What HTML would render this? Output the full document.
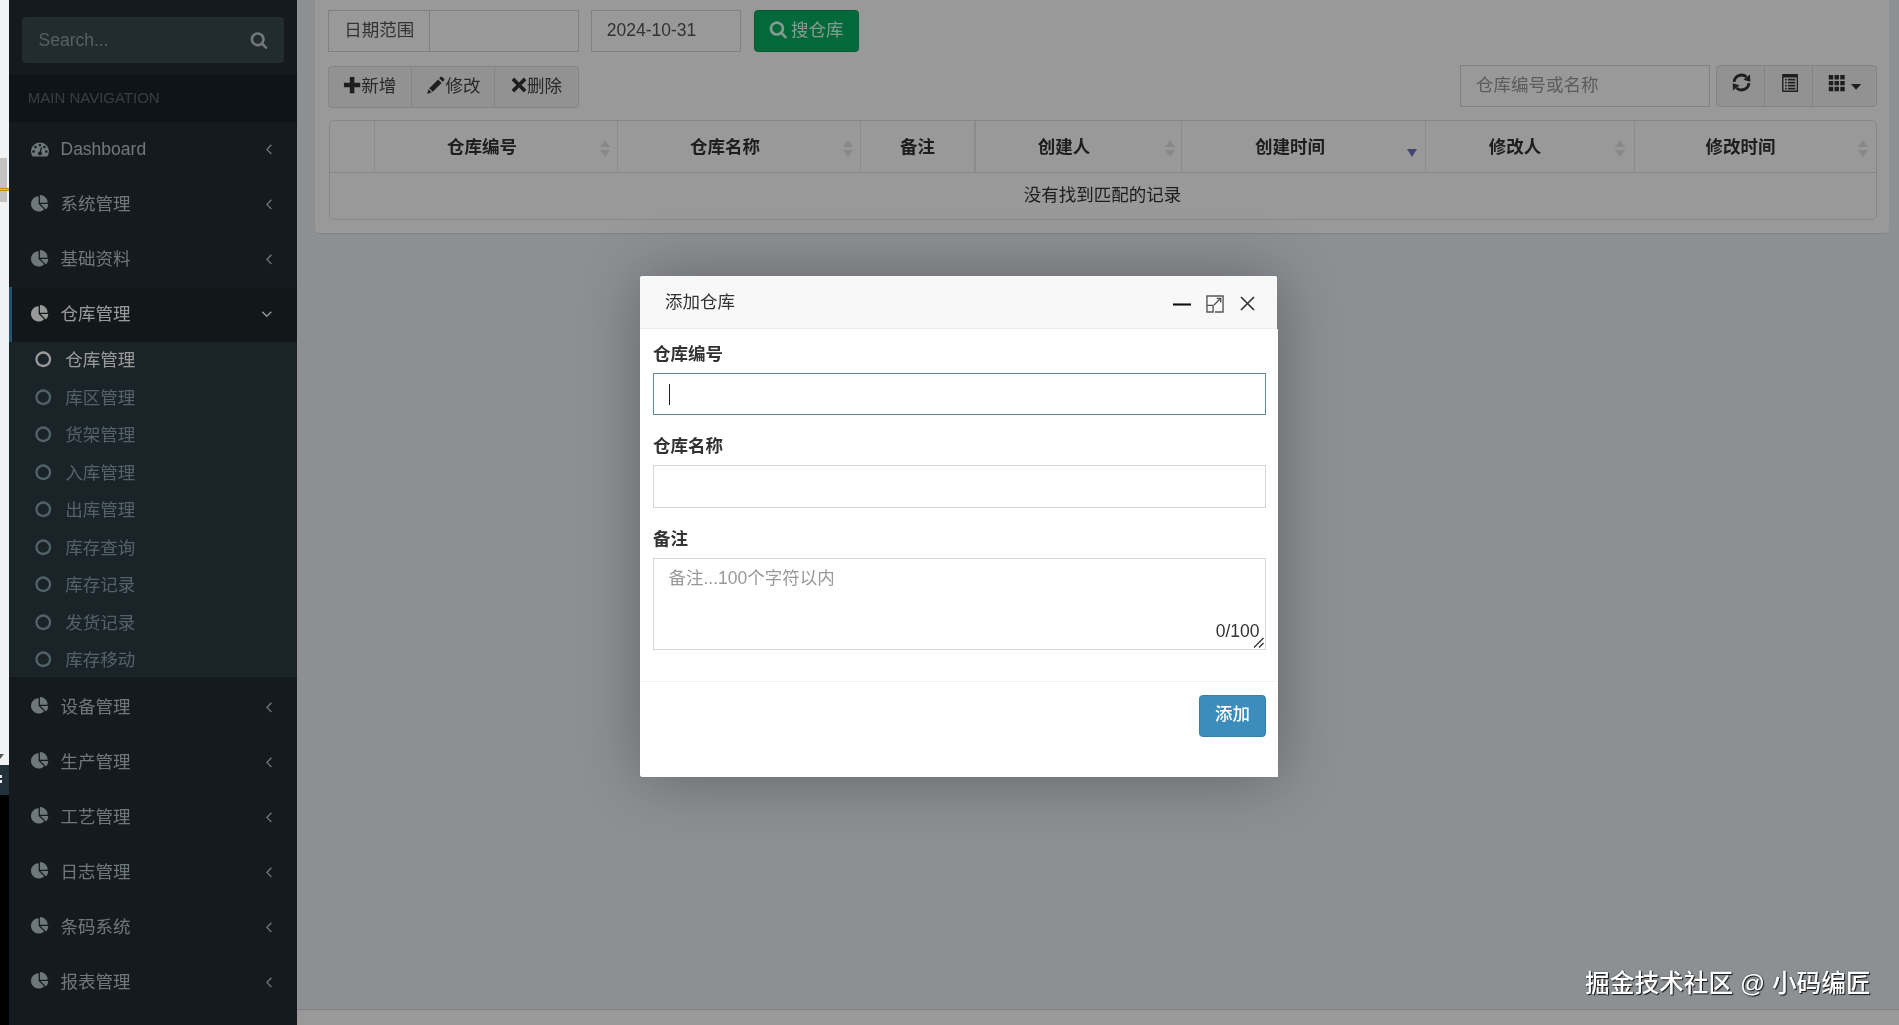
<!DOCTYPE html>
<html lang="zh-CN">
<head>
<meta charset="utf-8">
<title>仓库管理</title>
<style>
*{box-sizing:border-box;margin:0;padding:0}
html,body{width:1899px;height:1025px;overflow:hidden;background:#ecf0f5}
body{position:relative;font-family:"Liberation Sans","Noto Sans CJK SC",sans-serif;font-size:17.5px;line-height:25px;color:#333}
svg{display:block}
.abs{position:absolute}
#side,#content,#modal,#wm{will-change:transform}
/* ---------- left strip (outside page) ---------- */
#strip{position:absolute;left:0;top:0;width:9px;height:1025px;background:#f1f2f3;z-index:50;overflow:hidden}
#strip .g{position:absolute;left:0;top:158px;width:7px;height:44px;background:#c2c2c2}
#strip .o{position:absolute;left:0;top:188px;width:9px;height:3px;background:#b98a12}
#strip .o i{position:absolute;left:0;top:1px;width:9px;height:1px;background:#e6c04a}
#strip .t{position:absolute;left:0;top:765px;width:9px;height:30px;background:#22303a}
#strip .b{position:absolute;left:0;top:795px;width:9px;height:230px;background:#000}
#strip .tri{position:absolute;left:-4px;top:753.5px;width:0;height:0;border-left:4px solid transparent;border-right:4px solid transparent;border-top:5px solid #555}
#strip .w{position:absolute;left:0;top:775px;width:2px;height:3px;background:#e8eef2;box-shadow:0 5px 0 #e8eef2}
/* ---------- sidebar ---------- */
#side{position:absolute;left:9px;top:0;width:288px;height:1025px;background:#242c33;color:#b8c7ce}
#sform{position:absolute;left:13px;top:17px;width:262px;height:46px;background:#374850;border-radius:4px}
#sform span{position:absolute;left:16.5px;top:11px;color:#c9d0d4;opacity:.62}
#sform svg{position:absolute;left:228px;top:14px;width:18px;height:18px;fill:#dfe6ea;opacity:.8}
#mhead{position:absolute;left:0;top:75px;width:288px;height:47px;background:#1a222b;color:#5c6870;font-size:15px;line-height:46.5px;padding-left:18.75px}
ul{list-style:none}
#menu{position:absolute;left:0;top:122px;width:288px}
#menu>li>a{display:block;position:relative;height:55px;line-height:25px;padding:15px 6px 15px 18.75px;border-left:3.75px solid transparent;color:#b8c7ce;white-space:nowrap}
#menu>li>a .ic{position:absolute;left:18.65px;top:17.8px;width:17.9px;height:17.9px;fill:#b8c7ce}
#menu>li>a .tx{position:absolute;left:48.5px;top:15px}
#menu>li>a .ch{position:absolute;right:20px;top:18px;width:17.5px;height:17.5px;fill:#b8c7ce}
#menu>li.act>a{background:#1e282c;border-left-color:#3c8dbc;color:#fff}
#menu>li.act>a .ic,#menu>li.act>a .ch{fill:#fff}
#menu>li.act>a .ch{right:21.5px}
#sub{background:linear-gradient(#2c3b41 0,#2c3b41 335.25px,rgba(44,59,65,0) 335.25px);padding-left:6.25px}
#sub li a{display:block;position:relative;height:37.5px;color:#8aa4af}
#sub li a svg{position:absolute;left:18.25px;top:8.25px;width:18.5px;height:18.5px;fill:#8aa4af}
#sub li a span{position:absolute;left:50px;top:6.25px}
#sub li.on a{color:#fff}
#sub li.on a svg{fill:#fff}
/* ---------- content ---------- */
#box{position:absolute;left:315px;top:-10px;width:1574px;height:242.5px;background:#fff;border-radius:4px;box-shadow:0 1px 1px rgba(0,0,0,.1)}
#foot{position:absolute;left:297px;top:1009px;width:1602px;height:16px;background:#fff;border-top:1px solid #d2d6de}

/* ---------- content widgets ---------- */
.fc{position:absolute;height:41.5px;background:#fff;border:1.25px solid #d6d8dc;color:#555;line-height:25px;padding:7px 15px;white-space:nowrap}
.bt{position:absolute;height:41.5px;background:#f4f4f4;border:1.25px solid #ddd;color:#444;white-space:nowrap}
.bt svg{position:absolute;fill:#333}
.bt span{position:absolute;top:6.5px}
#gbtn{position:absolute;left:754px;top:10px;width:105px;height:41.5px;background:#08b062;border:1.25px solid #009a54;border-radius:3.75px;color:#e0fff0}
#gbtn svg{position:absolute;left:13.700px;top:9.200px;width:18.500px;height:18.500px;fill:#e0fff0}
#gbtn span{position:absolute;left:36px;top:6.5px}
#tbl{position:absolute;left:328.6px;top:120px;width:1548px;height:99.5px;border:1.25px solid #e2e2e2;border-radius:5px}
#tbl .hb{position:absolute;left:0;top:51px;width:100%;height:1.25px;background:#e0e0e0}
#tbl .v{position:absolute;top:0;width:1.25px;height:51px;background:#eaeaea}
#tbl .th{position:absolute;top:14.25px;font-weight:700;color:#333;text-align:center;width:120px;margin-left:-60px;white-space:nowrap}
#tbl .so{position:absolute;top:19px;width:10px;height:18px}
#tbl .so i{position:absolute;left:0;width:0;height:0;border-left:5px solid transparent;border-right:5px solid transparent}
#tbl .so i.u{top:0;border-bottom:7.5px solid #e3e3e3}
#tbl .so i.d{top:10px;border-top:7.5px solid #e3e3e3}
#tbl .sd{position:absolute;top:27.5px;width:0;height:0;border-left:5.5px solid transparent;border-right:5.5px solid transparent;border-top:8.5px solid #6e74c4}
#tbl .nr{position:absolute;left:0;top:61.5px;width:100%;text-align:center;color:#333}
/* overlay */
#shade{position:absolute;left:9px;top:0;width:1890px;height:1025px;background:rgba(0,0,0,.4);z-index:20}
/* ---------- modal ---------- */
#modal{position:absolute;left:640px;top:276px;width:637.4px;height:501px;background:#fff;z-index:30;box-shadow:1.25px 1.25px 62.5px rgba(0,0,0,.3);border-radius:2.5px}
#mtitle{position:absolute;left:0;top:0;width:100%;height:52.5px;background:#f8f8f8;border-bottom:1.25px solid #eee;border-radius:2.5px 2.5px 0 0;color:#333;padding-left:24.9px;line-height:53px}

#mtitle svg{position:absolute;stroke:#2e2d3c;fill:none}
#mbody label{position:absolute;left:13px;font-weight:700;color:#333;white-space:nowrap}
#mbody .in{position:absolute;left:13px;width:613px;background:#fff;border:1.25px solid #d4d6da}
#mbody .in.f{border-color:#5b8b8e}
#mfoot{position:absolute;left:0;top:405px;width:100%;height:1.25px;background:#f4f4f4}
#abtn{position:absolute;left:559px;top:419px;width:67px;height:41.5px;background:#3c8dbc;border:1.25px solid #367fa9;border-radius:3.75px;color:#fff;text-align:center;line-height:25px;padding-top:6.25px;font-weight:500}
/* watermark */
#wm{position:absolute;left:1585px;top:967px;z-index:60;color:#fff;font-weight:500;font-size:24.7px;line-height:34px;white-space:nowrap;text-shadow:1px 1px 1px rgba(0,0,0,.85),0 0 2px rgba(0,0,0,.35)}
</style>
</head>
<body>
<div id="strip"><div class="g"></div><div class="o"><i></i></div><div class="tri"></div><div class="t"></div><div class="w"></div><div class="b"></div></div>

<div id="side">
  <div id="sform"><span>Search...</span>
    <svg viewBox="0 0 1792 1792"><path d="M1216 832q0-185-131.500-316.500t-316.500-131.500-316.500 131.500-131.500 316.500 131.500 316.500 316.500 131.500 316.500-131.500 131.500-316.500zm512 832q0 52-38 90t-90 38q-54 0-90-38l-343-342q-179 124-399 124-143 0-273.500-55.500t-225-150-150-225-55.500-273.500 55.500-273.500 150-225 225-150 273.500-55.500 273.500 55.500 225 150 150 225 55.500 273.500q0 220-124 399l343 343q37 37 37 90z"/></svg>
  </div>
  <div id="mhead">MAIN NAVIGATION</div>
  <ul id="menu">
    <li><a><svg class="ic" viewBox="0 0 1792 1792"><path d="M384 1152q0-53-37.500-90.500t-90.500-37.500-90.500 37.500-37.500 90.500 37.500 90.500 90.500 37.500 90.500-37.500 37.500-90.500zm192-448q0-53-37.500-90.500t-90.500-37.500-90.500 37.500-37.500 90.500 37.500 90.500 90.500 37.500 90.500-37.500 37.500-90.500zm428 481l101-382q6-26-7.500-48.500t-38.500-29.500-48 6.500-30 39.500l-101 382q-60 5-107 43.500t-63 98.500q-20 77 20 146t117 89 146-20 89-117q16-60-6-117t-72-91zm660-33q0-53-37.500-90.500t-90.500-37.500-90.500 37.500-37.500 90.500 37.500 90.500 90.500 37.500 90.500-37.500 37.500-90.500zm-640-640q0-53-37.500-90.500t-90.500-37.500-90.500 37.500-37.500 90.500 37.500 90.500 90.500 37.500 90.500-37.500 37.500-90.500zm448 192q0-53-37.500-90.500t-90.500-37.500-90.500 37.500-37.500 90.500 37.500 90.500 90.500 37.500 90.500-37.500 37.500-90.500zm320 448q0 261-141 483-19 29-54 29h-1402q-35 0-54-29-141-221-141-483 0-182 71-348t191-286 286-191 348-71 348 71 286 191 191 286 71 348z"/></svg><span class="tx">Dashboard</span><svg class="ch" viewBox="0 0 1792 1792"><path d="M1203 544q0 13-10 23l-393 393 393 393q10 10 10 23t-10 23l-50 50q-10 10-23 10t-23-10l-466-466q-10-10-10-23t10-23l466-466q10-10 23-10t23 10l50 50q10 10 10 23z"/></svg></a></li>
    <li><a><svg class="ic" viewBox="0 0 1792 1792"><path d="M768 890l546 546q-106 108-247.500 168t-298.500 60q-209 0-385.500-103t-279.500-279.500-103-385.500 103-385.500 279.500-279.500 385.500-103v762zm187 6h773q0 157-60 298.500t-168 247.500zm709-128h-768v-768q209 0 385.500 103t279.500 279.500 103 385.500z"/></svg><span class="tx">系统管理</span><svg class="ch" viewBox="0 0 1792 1792"><path d="M1203 544q0 13-10 23l-393 393 393 393q10 10 10 23t-10 23l-50 50q-10 10-23 10t-23-10l-466-466q-10-10-10-23t10-23l466-466q10-10 23-10t23 10l50 50q10 10 10 23z"/></svg></a></li>
    <li><a><svg class="ic" viewBox="0 0 1792 1792"><path d="M768 890l546 546q-106 108-247.500 168t-298.500 60q-209 0-385.500-103t-279.500-279.500-103-385.500 103-385.500 279.500-279.500 385.500-103v762zm187 6h773q0 157-60 298.500t-168 247.500zm709-128h-768v-768q209 0 385.500 103t279.500 279.500 103 385.500z"/></svg><span class="tx">基础资料</span><svg class="ch" viewBox="0 0 1792 1792"><path d="M1203 544q0 13-10 23l-393 393 393 393q10 10 10 23t-10 23l-50 50q-10 10-23 10t-23-10l-466-466q-10-10-10-23t10-23l466-466q10-10 23-10t23 10l50 50q10 10 10 23z"/></svg></a></li>
    <li class="act"><a><svg class="ic" viewBox="0 0 1792 1792"><path d="M768 890l546 546q-106 108-247.500 168t-298.500 60q-209 0-385.500-103t-279.500-279.500-103-385.500 103-385.500 279.500-279.500 385.500-103v762zm187 6h773q0 157-60 298.500t-168 247.500zm709-128h-768v-768q209 0 385.500 103t279.500 279.500 103 385.500z"/></svg><span class="tx">仓库管理</span><svg class="ch" viewBox="0 0 1792 1792"><path d="M1395 736q0 13-10 23l-466 466q-10 10-23 10t-23-10l-466-466q-10-10-10-23t10-23l50-50q10-10 23-10t23 10l393 393 393-393q10-10 23-10t23 10l50 50q10 10 10 23z"/></svg></a>
      <ul id="sub">
        <li class="on"><a><svg viewBox="0 0 1792 1792"><path d="M896 352q-148 0-273 73t-198 198-73 273 73 273 198 198 273 73 273-73 198-198 73-273-73-273-198-198-273-73zm768 544q0 209-103 385.500t-279.500 279.500-385.500 103-385.500-103-279.500-279.500-103-385.500 103-385.500 279.500-279.500 385.500-103 385.500 103 279.500 279.500 103 385.500z"/></svg><span>仓库管理</span></a></li>
        <li><a><svg viewBox="0 0 1792 1792"><path d="M896 352q-148 0-273 73t-198 198-73 273 73 273 198 198 273 73 273-73 198-198 73-273-73-273-198-198-273-73zm768 544q0 209-103 385.500t-279.500 279.500-385.500 103-385.500-103-279.500-279.500-103-385.500 103-385.500 279.500-279.500 385.500-103 385.500 103 279.500 279.500 103 385.500z"/></svg><span>库区管理</span></a></li>
        <li><a><svg viewBox="0 0 1792 1792"><path d="M896 352q-148 0-273 73t-198 198-73 273 73 273 198 198 273 73 273-73 198-198 73-273-73-273-198-198-273-73zm768 544q0 209-103 385.500t-279.500 279.500-385.500 103-385.500-103-279.500-279.500-103-385.500 103-385.500 279.500-279.500 385.500-103 385.500 103 279.500 279.500 103 385.500z"/></svg><span>货架管理</span></a></li>
        <li><a><svg viewBox="0 0 1792 1792"><path d="M896 352q-148 0-273 73t-198 198-73 273 73 273 198 198 273 73 273-73 198-198 73-273-73-273-198-198-273-73zm768 544q0 209-103 385.500t-279.500 279.500-385.500 103-385.500-103-279.500-279.500-103-385.500 103-385.500 279.500-279.500 385.500-103 385.500 103 279.500 279.500 103 385.500z"/></svg><span>入库管理</span></a></li>
        <li><a><svg viewBox="0 0 1792 1792"><path d="M896 352q-148 0-273 73t-198 198-73 273 73 273 198 198 273 73 273-73 198-198 73-273-73-273-198-198-273-73zm768 544q0 209-103 385.500t-279.500 279.500-385.500 103-385.500-103-279.500-279.500-103-385.500 103-385.500 279.500-279.500 385.500-103 385.500 103 279.500 279.500 103 385.500z"/></svg><span>出库管理</span></a></li>
        <li><a><svg viewBox="0 0 1792 1792"><path d="M896 352q-148 0-273 73t-198 198-73 273 73 273 198 198 273 73 273-73 198-198 73-273-73-273-198-198-273-73zm768 544q0 209-103 385.500t-279.500 279.500-385.500 103-385.500-103-279.500-279.500-103-385.500 103-385.500 279.500-279.500 385.500-103 385.500 103 279.500 279.500 103 385.500z"/></svg><span>库存查询</span></a></li>
        <li><a><svg viewBox="0 0 1792 1792"><path d="M896 352q-148 0-273 73t-198 198-73 273 73 273 198 198 273 73 273-73 198-198 73-273-73-273-198-198-273-73zm768 544q0 209-103 385.500t-279.500 279.500-385.500 103-385.500-103-279.500-279.500-103-385.500 103-385.500 279.500-279.500 385.500-103 385.500 103 279.500 279.500 103 385.500z"/></svg><span>库存记录</span></a></li>
        <li><a><svg viewBox="0 0 1792 1792"><path d="M896 352q-148 0-273 73t-198 198-73 273 73 273 198 198 273 73 273-73 198-198 73-273-73-273-198-198-273-73zm768 544q0 209-103 385.500t-279.500 279.500-385.500 103-385.500-103-279.500-279.500-103-385.500 103-385.500 279.500-279.500 385.500-103 385.500 103 279.500 279.500 103 385.500z"/></svg><span>发货记录</span></a></li>
        <li><a><svg viewBox="0 0 1792 1792"><path d="M896 352q-148 0-273 73t-198 198-73 273 73 273 198 198 273 73 273-73 198-198 73-273-73-273-198-198-273-73zm768 544q0 209-103 385.500t-279.500 279.500-385.500 103-385.500-103-279.500-279.500-103-385.500 103-385.500 279.500-279.500 385.500-103 385.500 103 279.500 279.500 103 385.500z"/></svg><span>库存移动</span></a></li>
      </ul>
    </li>
    <li><a><svg class="ic" viewBox="0 0 1792 1792"><path d="M768 890l546 546q-106 108-247.500 168t-298.500 60q-209 0-385.500-103t-279.500-279.500-103-385.500 103-385.500 279.500-279.500 385.500-103v762zm187 6h773q0 157-60 298.500t-168 247.500zm709-128h-768v-768q209 0 385.500 103t279.500 279.500 103 385.500z"/></svg><span class="tx">设备管理</span><svg class="ch" viewBox="0 0 1792 1792"><path d="M1203 544q0 13-10 23l-393 393 393 393q10 10 10 23t-10 23l-50 50q-10 10-23 10t-23-10l-466-466q-10-10-10-23t10-23l466-466q10-10 23-10t23 10l50 50q10 10 10 23z"/></svg></a></li>
    <li><a><svg class="ic" viewBox="0 0 1792 1792"><path d="M768 890l546 546q-106 108-247.500 168t-298.500 60q-209 0-385.500-103t-279.500-279.500-103-385.500 103-385.500 279.500-279.500 385.500-103v762zm187 6h773q0 157-60 298.500t-168 247.500zm709-128h-768v-768q209 0 385.500 103t279.500 279.500 103 385.500z"/></svg><span class="tx">生产管理</span><svg class="ch" viewBox="0 0 1792 1792"><path d="M1203 544q0 13-10 23l-393 393 393 393q10 10 10 23t-10 23l-50 50q-10 10-23 10t-23-10l-466-466q-10-10-10-23t10-23l466-466q10-10 23-10t23 10l50 50q10 10 10 23z"/></svg></a></li>
    <li><a><svg class="ic" viewBox="0 0 1792 1792"><path d="M768 890l546 546q-106 108-247.500 168t-298.500 60q-209 0-385.500-103t-279.500-279.500-103-385.500 103-385.500 279.500-279.500 385.500-103v762zm187 6h773q0 157-60 298.500t-168 247.500zm709-128h-768v-768q209 0 385.500 103t279.500 279.500 103 385.500z"/></svg><span class="tx">工艺管理</span><svg class="ch" viewBox="0 0 1792 1792"><path d="M1203 544q0 13-10 23l-393 393 393 393q10 10 10 23t-10 23l-50 50q-10 10-23 10t-23-10l-466-466q-10-10-10-23t10-23l466-466q10-10 23-10t23 10l50 50q10 10 10 23z"/></svg></a></li>
    <li><a><svg class="ic" viewBox="0 0 1792 1792"><path d="M768 890l546 546q-106 108-247.500 168t-298.500 60q-209 0-385.500-103t-279.500-279.500-103-385.500 103-385.500 279.500-279.500 385.500-103v762zm187 6h773q0 157-60 298.500t-168 247.500zm709-128h-768v-768q209 0 385.500 103t279.500 279.500 103 385.500z"/></svg><span class="tx">日志管理</span><svg class="ch" viewBox="0 0 1792 1792"><path d="M1203 544q0 13-10 23l-393 393 393 393q10 10 10 23t-10 23l-50 50q-10 10-23 10t-23-10l-466-466q-10-10-10-23t10-23l466-466q10-10 23-10t23 10l50 50q10 10 10 23z"/></svg></a></li>
    <li><a><svg class="ic" viewBox="0 0 1792 1792"><path d="M768 890l546 546q-106 108-247.500 168t-298.500 60q-209 0-385.500-103t-279.500-279.500-103-385.500 103-385.500 279.500-279.500 385.500-103v762zm187 6h773q0 157-60 298.500t-168 247.500zm709-128h-768v-768q209 0 385.500 103t279.500 279.500 103 385.500z"/></svg><span class="tx">条码系统</span><svg class="ch" viewBox="0 0 1792 1792"><path d="M1203 544q0 13-10 23l-393 393 393 393q10 10 10 23t-10 23l-50 50q-10 10-23 10t-23-10l-466-466q-10-10-10-23t10-23l466-466q10-10 23-10t23 10l50 50q10 10 10 23z"/></svg></a></li>
    <li><a><svg class="ic" viewBox="0 0 1792 1792"><path d="M768 890l546 546q-106 108-247.500 168t-298.500 60q-209 0-385.500-103t-279.500-279.500-103-385.500 103-385.500 279.500-279.500 385.500-103v762zm187 6h773q0 157-60 298.500t-168 247.500zm709-128h-768v-768q209 0 385.500 103t279.500 279.500 103 385.500z"/></svg><span class="tx">报表管理</span><svg class="ch" viewBox="0 0 1792 1792"><path d="M1203 544q0 13-10 23l-393 393 393 393q10 10 10 23t-10 23l-50 50q-10 10-23 10t-23-10l-466-466q-10-10-10-23t10-23l466-466q10-10 23-10t23 10l50 50q10 10 10 23z"/></svg></a></li>
  </ul>
</div>

<div id="box"></div>

<div id="content">
  <div class="fc" style="left:328.2px;top:10px;width:102.4px;border-radius:0">日期范围</div>
  <div class="fc" style="left:429.3px;top:10px;width:149.3px"></div>
  <div class="fc" style="left:590.8px;top:10px;width:150px">2024-10-31</div>
  <div id="gbtn"><svg viewBox="0 0 1792 1792"><path d="M1216 832q0-185-131.500-316.500t-316.500-131.500-316.500 131.500-131.500 316.500 131.500 316.500 316.500 131.500 316.500-131.500 131.500-316.500zm512 832q0 52-38 90t-90 38q-54 0-90-38l-343-342q-179 124-399 124-143 0-273.500-55.500t-225-150-150-225-55.500-273.500 55.500-273.500 150-225 225-150 273.500-55.500 273.500 55.500 225 150 150 225 55.500 273.500q0 220-124 399l343 343q37 37 37 90z"/></svg><span>搜仓库</span></div>

  <div class="bt" style="left:328.2px;top:66px;width:84px;border-radius:3.75px 0 0 3.75px">
    <svg style="left:13.5px;top:9.3px;width:18.2px;height:18.2px" viewBox="0 0 16 16"><path d="M6 .8h4V6h5.2v4H10v5.2H6V10H.8V6H6z"/></svg><span style="left:32px">新增</span></div>
  <div class="bt" style="left:411px;top:66px;width:84.7px">
    <svg style="left:13.7px;top:7.5px;width:20px;height:20px" viewBox="0 0 20 20"><path d="M1.200 18.800l1.300-4.600 3.300 3.300zM3.300 13.200l8.800-8.800 3.500 3.500-8.800 8.800zM13.200 3.300l1.500-1.500q.6-.6 1.200 0l2.300 2.300q.6.6 0 1.200l-1.500 1.500z"/></svg><span style="left:33.5px">修改</span></div>
  <div class="bt" style="left:494px;top:66px;width:84.5px;border-radius:0 3.75px 3.75px 0">
    <svg style="left:15.8px;top:9.8px;width:16px;height:16px" viewBox="0 0 16 16"><path d="M3.2.6L8 5.4 12.8.6l2.6 2.6L10.6 8l4.8 4.8-2.6 2.6L8 10.6l-4.8 4.8-2.6-2.6L5.400 8 .6 3.200z"/></svg><span style="left:32px">删除</span></div>

  <div class="fc" style="left:1460px;top:65px;width:250px;color:#999">仓库编号或名称</div>
  <div class="bt" style="left:1716.3px;top:65.25px;width:49.400px;border-radius:3.75px 0 0 3.75px">
    <svg style="left:13.500px;top:6px;width:21px;height:21px" viewBox="0 0 20 20"><path d="M2.93 9.38 A7.10 7.10 0 0 1 14.75 4.72 M17.07 10.62 A7.10 7.10 0 0 1 5.25 15.28" fill="none" stroke="#333" stroke-width="2.700"/><path d="M18.44 9.27 L18.11 2.41 L11.86 7.29 Z M1.56 10.73 L1.89 17.59 L8.14 12.71 Z"/></svg></div>
  <div class="bt" style="left:1763.500px;top:65.25px;width:50.200px">
    <svg style="left:17.800px;top:8px;width:16.200px;height:18px" viewBox="0 0 16 18"><path fill-rule="evenodd" d="M.8 0h14.400q.8 0 .8.800v16.400q0 .8-.8.800H.8q-.8 0-.8-.8V.8Q0 0 .8 0zM1.400 3.400v13.200h13.200V3.400zM2.900 4.800h1.700v1.800H2.900zM5.700 4.800h7.500v1.800H5.700zM2.900 7.800h1.700v1.800H2.900zM5.700 7.800h7.500v1.800H5.700zM2.900 10.800h1.700v1.800H2.900zM5.700 10.800h7.500v1.800H5.700zM2.900 13.800h1.700v1.800H2.900zM5.700 13.800h7.500v1.800H5.700z"/></svg></div>
  <div class="bt" style="left:1812.400px;top:65.25px;width:64.2px;border-radius:0 3.75px 3.75px 0">
    <svg style="left:14.75px;top:8px;width:17.500px;height:18.400px" preserveAspectRatio="none" viewBox="0 0 18 18"><path d="M.8 1h4.600v4.300H.8zM6.700 1h4.600v4.300H6.700zM12.600 1h4.600v4.300h-4.600zM.8 6.800h4.600v4.300H.8zM6.700 6.800h4.600v4.300H6.700zM12.600 6.800h4.600v4.300h-4.600zM.8 12.600h4.600v4.300H.8zM6.700 12.600h4.600v4.300H6.700zM12.600 12.600h4.600v4.300h-4.600z"/></svg>
    <svg style="left:38px;top:18px;width:10.200px;height:5.800px" preserveAspectRatio="none" viewBox="0 0 10 5"><path d="M0 0h10L5 5z"/></svg></div>

  <div id="tbl">
    <div class="hb"></div>
    <div class="v" style="left:44px"></div><div class="v" style="left:287.500px"></div><div class="v" style="left:530.500px"></div><div class="v" style="left:644.700px"></div><div class="v" style="left:851.500px"></div><div class="v" style="left:1095.500px"></div><div class="v" style="left:1304px"></div>
    <div class="th" style="left:152.500px">仓库编号</div><div class="so" style="left:270px"><i class="u"></i><i class="d"></i></div>
    <div class="th" style="left:395.500px">仓库名称</div><div class="so" style="left:513px"><i class="u"></i><i class="d"></i></div>
    <div class="th" style="left:588px">备注</div>
    <div class="th" style="left:734.500px">创建人</div><div class="so" style="left:835px"><i class="u"></i><i class="d"></i></div>
    <div class="th" style="left:960.500px">创建时间</div><div class="sd" style="left:1077px"></div>
    <div class="th" style="left:1185.500px">修改人</div><div class="so" style="left:1285px"><i class="u"></i><i class="d"></i></div>
    <div class="th" style="left:1411px">修改时间</div><div class="so" style="left:1528px"><i class="u"></i><i class="d"></i></div>
    <div class="nr">没有找到匹配的记录</div>
  </div>
</div>
<div id="foot"></div>
<div id="shade"></div>

<div id="modal">
  <div id="mtitle">添加仓库
    <svg style="left:533.4px;top:27.25px;width:18px;height:3px;stroke:#111" viewBox="0 0 18 3"><path d="M0 1.5h18" stroke-width="2.100"/></svg>
    <svg style="left:565.800px;top:18.850px;width:18px;height:18px;stroke:#555" viewBox="0 0 19 19"><path stroke-width="1.450" d="M1 11V1h17v17h-8.500M1 11h6.500v7H1zM8.500 10.500l7-7M11.300 3.600h4.200v4.200"/></svg>
    <svg style="left:599.900px;top:19.900px;width:15px;height:15px;stroke:#333" viewBox="0 0 15 15"><path stroke-width="1.700" d="M1 1l13 13M14 1L1 14"/></svg>
  </div>
  <div id="mbody"><i style="position:absolute;left:636.4px;top:52.75px;width:1.700px;height:448.250px;background:#fff"></i>
    <label style="top:65.500px">仓库编号</label>
    <div class="in f" style="top:97px;height:42px"><i style="position:absolute;left:15px;top:9.500px;width:1.250px;height:21px;background:#222"></i></div>
    <label style="top:157.500px">仓库名称</label>
    <div class="in" style="top:189px;height:42.500px"></div>
    <label style="top:250.500px">备注</label>
    <div class="in" style="top:282px;height:92px">
      <span style="position:absolute;left:14.500px;top:6.500px;color:#999;white-space:nowrap">备注...100个字符以内</span>
      <span style="position:absolute;right:5.500px;top:59.75px;color:#333;white-space:nowrap">0/100</span>
      <svg style="position:absolute;right:1px;bottom:1px;width:11px;height:11px" viewBox="0 0 11 11"><path d="M10.500 1L1 10.500M10.500 6L6 10.500" stroke="#333" stroke-width="1.300" fill="none"/></svg>
    </div>
    <div id="mfoot"></div>
    <div id="abtn">添加</div>
  </div>
</div>

<div id="wm">掘金技术社区 @ 小码编匠</div>
</body>
</html>
